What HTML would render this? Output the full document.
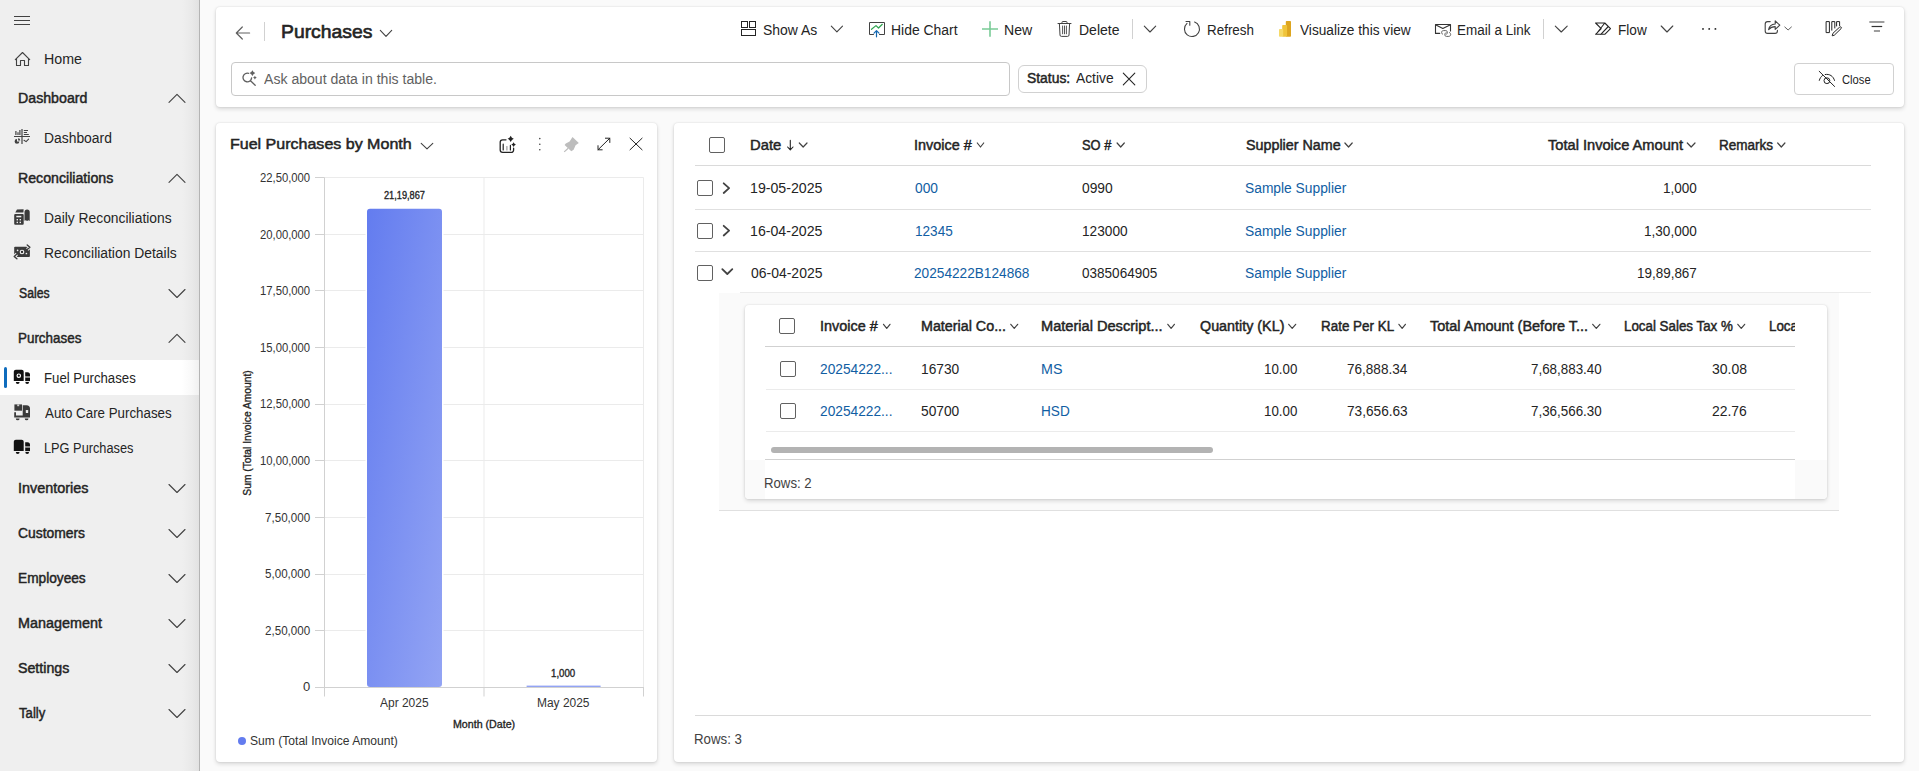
<!DOCTYPE html>
<html lang="en">
<head>
<meta charset="utf-8">
<title>Purchases - Fuel Purchases</title>
<style>
html,body{margin:0;padding:0}
body{width:1919px;height:771px;overflow:hidden;background:#fafafa;font-family:"Liberation Sans",sans-serif;position:relative;color:#242424}
.abs{position:absolute}
.t{position:absolute;white-space:pre;line-height:20px;transform-origin:0 50%}
.card{position:absolute;background:#fff;border-radius:4px;box-shadow:0 0 2px rgba(0,0,0,.12),0 2px 4px rgba(0,0,0,.14)}
.ln{position:absolute;height:1px;background:#e0e0e0}
.vl{position:absolute;width:1px;background:#d1d1d1}
.cb{position:absolute;width:14px;height:14px;border:1px solid #616161;border-radius:2px;background:#fff}
svg{position:absolute;overflow:visible}
.ic{fill:none;stroke:#242424;stroke-width:1;stroke-linecap:round;stroke-linejoin:round}
</style>
</head>
<body>
<!-- ============ SIDEBAR ============ -->
<div id="sidebar" class="abs" style="left:0;top:0;width:199px;height:771px;background:linear-gradient(to right,#efefef 0,#efefef 182px,#e9e9e9 192px,#e2e2e2 199px);border-right:1px solid #b4b4b4"></div>
<div class="abs" style="left:0;top:360px;width:199px;height:35px;background:linear-gradient(to right,#fff 0,#fff 182px,#f8f8f8 192px,#f0f0f0 199px)"></div>
<div class="abs" style="left:4px;top:367px;width:3px;height:21px;background:#0f6cbd;border-radius:2px"></div>
<svg style="left:0;top:0" width="1919" height="771" viewBox="0 0 1919 771"><line x1="14" x2="30" y1="16.5" y2="16.5" stroke="#424242" stroke-width="1"/><line x1="14" x2="30" y1="20.5" y2="20.5" stroke="#424242" stroke-width="1"/><line x1="14" x2="30" y1="24.5" y2="24.5" stroke="#424242" stroke-width="1"/><path d="M15.3 59.7L22.5 52.5L29.7 59.7M16.5 58.6V65.5H20.5V60.5H24.5V65.5H28.5V58.6" fill="none" stroke="#424242" stroke-width="1.1" stroke-linecap="round" stroke-linejoin="round" /><line x1="14" x2="30" y1="136.5" y2="136.5" stroke="#424242" stroke-width="1"/><line x1="22" x2="22" y1="129" y2="144" stroke="#424242" stroke-width="1.2"/><line x1="15.9" x2="15.9" y1="131" y2="135" stroke="#424242" stroke-width="1.2"/><line x1="18" x2="18" y1="132.3" y2="135" stroke="#424242" stroke-width="1.2"/><line x1="19.9" x2="19.9" y1="130" y2="135" stroke="#424242" stroke-width="1.2"/><line x1="23.8" x2="28" y1="130.5" y2="130.5" stroke="#424242" stroke-width="1"/><line x1="23.8" x2="27" y1="132.5" y2="132.5" stroke="#424242" stroke-width="1"/><line x1="23.8" x2="28.8" y1="134.5" y2="134.5" stroke="#424242" stroke-width="1"/><path d="M17 139v2.4h2.4a2.4 2.4 0 1 1-2.4-2.4Z" fill="#424242" /><path d="M18.1 138.2a2.3 2.3 0 0 1 2.2 2.2h-2.2Z" fill="#424242" /><path d="M24 140.3L26.1 141.6L28.6 139.2" fill="none" stroke="#424242" stroke-width="1.1" stroke-linecap="round" stroke-linejoin="round" /><path d="M15.2 214h7.5a1 1 0 0 1 1 1v8.8a1 1 0 0 1-1 1h-7.5a1 1 0 0 1-1-1V215a1 1 0 0 1 1-1Z" fill="#3b3b3b" /><path d="M15.3 212.6L17 209.6L23.6 209.2L23.4 212.6Z" fill="#3b3b3b" /><path d="M24.5 220.8V212a2.6 2.6 0 0 1 5.2 0V220.9L28.4 220.2L27.1 220.9L25.8 220.2Z" fill="#3b3b3b" /><rect x="16.3" y="215.8" width="5" height="1.5" fill="#efefef"/><rect x="16.6" y="219.0" width="1.4" height="1.4" fill="#efefef"/><rect x="16.6" y="221.70000000000002" width="1.4" height="1.4" fill="#efefef"/><rect x="19.6" y="219.0" width="1.4" height="1.4" fill="#efefef"/><rect x="19.6" y="221.70000000000002" width="1.4" height="1.4" fill="#efefef"/><rect x="14.2" y="246.7" width="15.7" height="10.3" rx="0.9" fill="#3b3b3b"/><polyline points="27.2,244.9 29.9,247.2 27.2,249.5" fill="none" stroke="#efefef" stroke-width="3.3" stroke-linejoin="miter"/><polyline points="27.2,244.9 29.9,247.2 27.2,249.5" fill="none" stroke="#3b3b3b" stroke-width="1.35" stroke-linecap="round" stroke-linejoin="round"/><polyline points="16.9,254 14.2,256.4 16.9,258.8" fill="none" stroke="#efefef" stroke-width="3.3" stroke-linejoin="miter"/><polyline points="16.9,254 14.2,256.4 16.9,258.8" fill="none" stroke="#3b3b3b" stroke-width="1.35" stroke-linecap="round" stroke-linejoin="round"/><circle cx="22" cy="252" r="1.75" fill="#2a2a2a" stroke="#efefef" stroke-width="1.2"/><circle cx="17.6" cy="250.3" r="0.85" fill="#efefef"/><circle cx="26.4" cy="253.5" r="0.85" fill="#efefef"/><path d="M13.8 381.09999999999997V371.7a2 2 0 0 1 2-2h5.9a2 2 0 0 1 2 2V381.09999999999997Z" fill="#111" /><path d="M25.2 372.2h2.3a2.5 2.5 0 0 1 2.5 2.5V376.0H25.2Z" fill="#111" /><path d="M25.2 377.5H30V381.09999999999997H25.2Z" fill="#111" /><path d="M25.2 376.0H30V377.5H25.2Z" fill="#8a8a8a" /><path d="M15.799999999999999 382.0h3.8a1.9 1.9 0 0 1-3.8 0Z" fill="#111" /><path d="M25.3 382.0h3.8a1.9 1.9 0 0 1-3.8 0Z" fill="#111" /><circle cx="18.8" cy="375.7" r="1.7" fill="#111" stroke="#fff" stroke-width="1.2"/><path d="M14.4 404.4H22V410.7H14.4Z" fill="#3b3b3b" /><rect x="17.2" y="404.4" width="2" height="1.8" fill="#cfcfcf"/><path d="M14.2 412.2H16V415.5H22.7V405.2H26.5a3.5 3.5 0 0 1 3.5 3.5V417.6H14.2Z" fill="#3b3b3b" /><rect x="25.8" y="410" width="2.4" height="3" rx="0.6" fill="#efefef"/><path d="M15.799999999999999 418.4h3.8a1.9 1.9 0 0 1-3.8 0Z" fill="#3b3b3b" /><path d="M24.700000000000003 418.4h3.8a1.9 1.9 0 0 1-3.8 0Z" fill="#3b3b3b" /><path d="M13.8 451.09999999999997V441.7a2 2 0 0 1 2-2h5.9a2 2 0 0 1 2 2V451.09999999999997Z" fill="#111" /><path d="M25.2 442.2h2.3a2.5 2.5 0 0 1 2.5 2.5V446.0H25.2Z" fill="#111" /><path d="M25.2 447.5H30V451.09999999999997H25.2Z" fill="#111" /><path d="M25.2 446.0H30V447.5H25.2Z" fill="#8a8a8a" /><path d="M15.799999999999999 452.0h3.8a1.9 1.9 0 0 1-3.8 0Z" fill="#111" /><path d="M25.3 452.0h3.8a1.9 1.9 0 0 1-3.8 0Z" fill="#111" /><polyline points="169,102.3 177.0,94.3 185,102.3" fill="none" stroke="#424242" stroke-width="1.1" stroke-linecap="round" stroke-linejoin="round"/><polyline points="169,182.3 177.0,174.3 185,182.3" fill="none" stroke="#424242" stroke-width="1.1" stroke-linecap="round" stroke-linejoin="round"/><polyline points="169,342.3 177.0,334.3 185,342.3" fill="none" stroke="#424242" stroke-width="1.1" stroke-linecap="round" stroke-linejoin="round"/><polyline points="169,289.5 177.0,297.5 185,289.5" fill="none" stroke="#424242" stroke-width="1.1" stroke-linecap="round" stroke-linejoin="round"/><polyline points="169,484.5 177.0,492.5 185,484.5" fill="none" stroke="#424242" stroke-width="1.1" stroke-linecap="round" stroke-linejoin="round"/><polyline points="169,529.5 177.0,537.5 185,529.5" fill="none" stroke="#424242" stroke-width="1.1" stroke-linecap="round" stroke-linejoin="round"/><polyline points="169,574.5 177.0,582.5 185,574.5" fill="none" stroke="#424242" stroke-width="1.1" stroke-linecap="round" stroke-linejoin="round"/><polyline points="169,619.5 177.0,627.5 185,619.5" fill="none" stroke="#424242" stroke-width="1.1" stroke-linecap="round" stroke-linejoin="round"/><polyline points="169,664.5 177.0,672.5 185,664.5" fill="none" stroke="#424242" stroke-width="1.1" stroke-linecap="round" stroke-linejoin="round"/><polyline points="169,709.5 177.0,717.5 185,709.5" fill="none" stroke="#424242" stroke-width="1.1" stroke-linecap="round" stroke-linejoin="round"/></svg>

<!-- ============ HEADER CARD ============ -->
<div class="card" style="left:216px;top:7px;width:1688px;height:100px"></div>
<div class="vl" style="left:264px;top:22px;height:19px"></div>
<div class="abs" style="left:231px;top:62px;width:777px;height:32px;border:1px solid #c8c8c8;border-radius:4px;background:#fff"></div>
<div class="abs" style="left:1018px;top:65px;width:127px;height:26px;border:1px solid #d1d1d1;border-radius:6px;background:#fff"></div>
<div class="abs" style="left:1794px;top:63px;width:98px;height:30px;border:1px solid #d1d1d1;border-radius:4px;background:#fff"></div>
<div class="vl" style="left:1132px;top:19px;height:20px"></div>
<div class="vl" style="left:1543px;top:19px;height:20px"></div>

<!-- ============ CHART CARD ============ -->
<div class="card" style="left:216px;top:123px;width:441px;height:639px"></div>
<svg style="left:0;top:0" width="1919" height="771" viewBox="0 0 1919 771"><defs><linearGradient id="bg1" x1="0" y1="0" x2="1" y2="1"><stop offset="0" stop-color="#637cef"/><stop offset="1" stop-color="#93a4f4"/></linearGradient></defs><line x1="324.5" x2="643.5" y1="177.5" y2="177.5" stroke="#ebebeb" stroke-width="1"/><line x1="324.5" x2="643.5" y1="234.5" y2="234.5" stroke="#ebebeb" stroke-width="1"/><line x1="324.5" x2="643.5" y1="290.5" y2="290.5" stroke="#ebebeb" stroke-width="1"/><line x1="324.5" x2="643.5" y1="347.5" y2="347.5" stroke="#ebebeb" stroke-width="1"/><line x1="324.5" x2="643.5" y1="404.5" y2="404.5" stroke="#ebebeb" stroke-width="1"/><line x1="324.5" x2="643.5" y1="460.5" y2="460.5" stroke="#ebebeb" stroke-width="1"/><line x1="324.5" x2="643.5" y1="517.5" y2="517.5" stroke="#ebebeb" stroke-width="1"/><line x1="324.5" x2="643.5" y1="574.5" y2="574.5" stroke="#ebebeb" stroke-width="1"/><line x1="324.5" x2="643.5" y1="630.5" y2="630.5" stroke="#ebebeb" stroke-width="1"/><line x1="484" x2="484" y1="177.5" y2="687.5" stroke="#ebebeb" stroke-width="1"/><line x1="643.5" x2="643.5" y1="177.5" y2="687.5" stroke="#ebebeb" stroke-width="1"/><path d="M367 687V211.7a3 3 0 0 1 3-3h69a3 3 0 0 1 3 3V684a3 3 0 0 1-3 3h-69a3 3 0 0 1-3-3z" fill="url(#bg1)" stroke="#fff" stroke-width="3" paint-order="stroke"/><rect x="526.6" y="685.6" width="74" height="1.4" fill="#93a4f4"/><line x1="324.5" x2="324.5" y1="177.5" y2="696.5" stroke="#d1d1d1" stroke-width="1"/><line x1="324.5" x2="643.5" y1="687.5" y2="687.5" stroke="#d1d1d1" stroke-width="1"/><line x1="315" x2="324.5" y1="177.5" y2="177.5" stroke="#d1d1d1" stroke-width="1"/><line x1="315" x2="324.5" y1="234.5" y2="234.5" stroke="#d1d1d1" stroke-width="1"/><line x1="315" x2="324.5" y1="290.5" y2="290.5" stroke="#d1d1d1" stroke-width="1"/><line x1="315" x2="324.5" y1="347.5" y2="347.5" stroke="#d1d1d1" stroke-width="1"/><line x1="315" x2="324.5" y1="404.5" y2="404.5" stroke="#d1d1d1" stroke-width="1"/><line x1="315" x2="324.5" y1="460.5" y2="460.5" stroke="#d1d1d1" stroke-width="1"/><line x1="315" x2="324.5" y1="517.5" y2="517.5" stroke="#d1d1d1" stroke-width="1"/><line x1="315" x2="324.5" y1="574.5" y2="574.5" stroke="#d1d1d1" stroke-width="1"/><line x1="315" x2="324.5" y1="630.5" y2="630.5" stroke="#d1d1d1" stroke-width="1"/><line x1="315" x2="324.5" y1="687.5" y2="687.5" stroke="#d1d1d1" stroke-width="1"/><line x1="484" x2="484" y1="687" y2="696.5" stroke="#d1d1d1" stroke-width="1"/><line x1="643.5" x2="643.5" y1="687" y2="696.5" stroke="#d1d1d1" stroke-width="1"/><circle cx="242" cy="741" r="4" fill="#637cef"/></svg>

<!-- ============ GRID CARD ============ -->
<div class="card" style="left:674px;top:123px;width:1230px;height:639px"></div>
<div class="ln" style="left:695px;top:165px;width:1176px;background:#dadada"></div>
<div class="ln" style="left:695px;top:209px;width:1176px;background:#e0e0e0"></div>
<div class="ln" style="left:695px;top:251px;width:1176px;background:#e0e0e0"></div>
<div class="ln" style="left:740px;top:292px;width:1131px;background:#ebebeb"></div>
<div class="abs" style="left:719px;top:293px;width:1120px;height:217px;background:#fafafa"></div>
<div class="ln" style="left:719px;top:510px;width:1120px;background:#e0e0e0"></div>
<div class="card" style="left:745px;top:305px;width:1082px;height:194px"></div>
<div class="abs" style="left:745px;top:460px;width:20px;height:39px;background:#fafafa;border-radius:0 0 0 4px"></div>
<div class="abs" style="left:1795px;top:460px;width:32px;height:39px;background:#fafafa;border-radius:0 0 4px 0"></div>
<div class="ln" style="left:765px;top:346px;width:1030px;background:#d1d1d1"></div>
<div class="ln" style="left:766px;top:389px;width:1029px;background:#ebebeb"></div>
<div class="ln" style="left:766px;top:431px;width:1029px;background:#ebebeb"></div>
<div class="ln" style="left:765px;top:459px;width:1030px;background:#d1d1d1"></div>
<div class="abs" style="left:771px;top:447px;width:442px;height:6px;border-radius:3px;background:#b3b3b3"></div>
<div class="ln" style="left:695px;top:715px;width:1176px;background:#dadada"></div>
<div class="cb" style="left:709px;top:137px"></div>
<div class="cb" style="left:697px;top:180px"></div>
<div class="cb" style="left:697px;top:223px"></div>
<div class="cb" style="left:697px;top:265px"></div>
<div class="cb" style="left:779px;top:318px"></div>
<div class="cb" style="left:780px;top:361px"></div>
<div class="cb" style="left:780px;top:403px"></div>
<svg style="left:0;top:0" width="1919" height="771" viewBox="0 0 1919 771"><polyline points="799.3,143 803.15,147 807.0,143" fill="none" stroke="#424242" stroke-width="1.2" stroke-linecap="round" stroke-linejoin="round"/><polyline points="977.3,143 980.5,147 983.7,143" fill="none" stroke="#424242" stroke-width="1.2" stroke-linecap="round" stroke-linejoin="round"/><polyline points="1117.1,143 1120.6999999999998,147 1124.3,143" fill="none" stroke="#424242" stroke-width="1.2" stroke-linecap="round" stroke-linejoin="round"/><polyline points="1344.8999999999999,143 1348.55,147 1352.2,143" fill="none" stroke="#424242" stroke-width="1.2" stroke-linecap="round" stroke-linejoin="round"/><polyline points="1687.3,143 1691.15,147 1695.0,143" fill="none" stroke="#424242" stroke-width="1.2" stroke-linecap="round" stroke-linejoin="round"/><polyline points="1777.7,143 1781.3000000000002,147 1784.9,143" fill="none" stroke="#424242" stroke-width="1.2" stroke-linecap="round" stroke-linejoin="round"/><polyline points="883.5,324.3 886.75,328.3 890.0,324.3" fill="none" stroke="#424242" stroke-width="1.2" stroke-linecap="round" stroke-linejoin="round"/><polyline points="1010.8,324.3 1014.25,328.3 1017.7,324.3" fill="none" stroke="#424242" stroke-width="1.2" stroke-linecap="round" stroke-linejoin="round"/><polyline points="1167.8,324.3 1171.1,328.3 1174.4,324.3" fill="none" stroke="#424242" stroke-width="1.2" stroke-linecap="round" stroke-linejoin="round"/><polyline points="1288.7,324.3 1292.2,328.3 1295.7,324.3" fill="none" stroke="#424242" stroke-width="1.2" stroke-linecap="round" stroke-linejoin="round"/><polyline points="1398.8999999999999,324.3 1402.15,328.3 1405.4,324.3" fill="none" stroke="#424242" stroke-width="1.2" stroke-linecap="round" stroke-linejoin="round"/><polyline points="1592.7,324.3 1596.3000000000002,328.3 1599.9,324.3" fill="none" stroke="#424242" stroke-width="1.2" stroke-linecap="round" stroke-linejoin="round"/><polyline points="1737.8,324.3 1741.25,328.3 1744.7,324.3" fill="none" stroke="#424242" stroke-width="1.2" stroke-linecap="round" stroke-linejoin="round"/><path d="M790.3 140.4V149.8M787.6 147L790.3 149.9L793 147" fill="none" stroke="#242424" stroke-width="1.1" stroke-linecap="round" stroke-linejoin="round"/><polyline points="723.7,183.3 729.1,188.15 723.7,193" fill="none" stroke="#424242" stroke-width="1.8" stroke-linecap="round" stroke-linejoin="round"/><polyline points="723.7,225.8 729.1,230.65 723.7,235.5" fill="none" stroke="#424242" stroke-width="1.8" stroke-linecap="round" stroke-linejoin="round"/><polyline points="722.3,269.2 727.3,274 732.3,269.2" fill="none" stroke="#424242" stroke-width="1.8" stroke-linecap="round" stroke-linejoin="round"/></svg>
<svg style="left:0;top:0" width="1919" height="771" viewBox="0 0 1919 771"><path d="M249.6 33H236.4M242.3 27L236.3 33L242.3 39" fill="none" stroke="#616161" stroke-width="1.2" stroke-linecap="round" stroke-linejoin="round" /><polyline points="380.3,30.4 386.0,36.3 391.7,30.4" fill="none" stroke="#424242" stroke-width="1.1" stroke-linecap="round" stroke-linejoin="round"/><path d="M248.6 73.4A4.3 4.3 0 1 0 251.6 77.9M250.5 80.7L255.2 85.2" fill="none" stroke="#616161" stroke-width="1.3" stroke-linecap="round" stroke-linejoin="round" /><path d="M252.4 70.19999999999999Q253.21200000000002 72.288 255.3 73.1Q253.21200000000002 73.91199999999999 252.4 76.0Q251.588 73.91199999999999 249.5 73.1Q251.588 72.288 252.4 70.19999999999999Z" fill="#616161" /><path d="M254.9 75.69999999999999Q255.43200000000002 77.068 256.8 77.6Q255.43200000000002 78.13199999999999 254.9 79.5Q254.368 78.13199999999999 253.0 77.6Q254.368 77.068 254.9 75.69999999999999Z" fill="#616161" /><rect x="741.5" y="21.5" width="6" height="6" fill="none" stroke="#242424" stroke-width="1"/><rect x="749.5" y="21.5" width="6" height="6" fill="none" stroke="#242424" stroke-width="1"/><rect x="741.5" y="29.5" width="14" height="6" fill="none" stroke="#242424" stroke-width="1"/><polyline points="831.3,26.2 836.9,31.8 842.5,26.2" fill="none" stroke="#424242" stroke-width="1.1" stroke-linecap="round" stroke-linejoin="round"/><path d="M873.5 34.5H869.5V22.5H884.5V34.5H879.5" fill="none" stroke="#424242" stroke-width="1" stroke-linecap="round" stroke-linejoin="round" /><path d="M871.5 29.3L876 25.6L878.5 28L882.3 24.3" fill="none" stroke="#2ea44f" stroke-width="1.2" stroke-linecap="round" stroke-linejoin="round" /><path d="M876.5 36.8V30.8M874 33.2L876.5 30.7L879 33.2" fill="none" stroke="#1266b0" stroke-width="1.2" stroke-linecap="round" stroke-linejoin="round" /><path d="M982 29H998M990 21.2V36.8" fill="none" stroke="#79cb97" stroke-width="1.6"/><path d="M1058 23.5H1071M1062 23.3V22.3a0.8 0.8 0 0 1 0.8-0.8h3.4a0.8 0.8 0 0 1 0.8 0.8V23.3M1059.4 23.7L1060 35a1.4 1.4 0 0 0 1.4 1.4h6.2a1.4 1.4 0 0 0 1.4-1.4L1069.6 23.7" fill="none" stroke="#424242" stroke-width="1" stroke-linecap="round" stroke-linejoin="round" /><path d="M1062.6 26V33.8M1064.5 26V33.8M1066.4 26V33.8" fill="none" stroke="#424242" stroke-width="0.9" stroke-linecap="round" stroke-linejoin="round" /><polyline points="1144.3,26.2 1150.0,32 1155.7,26.2" fill="none" stroke="#424242" stroke-width="1.1" stroke-linecap="round" stroke-linejoin="round"/><path d="M1194.6 22A7.5 7.5 0 1 1 1187 23.4M1186 21.5H1189.8V25.2" fill="none" stroke="#424242" stroke-width="1.1" stroke-linecap="round" stroke-linejoin="round" /><rect x="1285.8" y="21" width="5.2" height="15.8" rx="0.8" fill="#dda51f"/><rect x="1282.2" y="25" width="4.9" height="11.8" rx="0.8" fill="#f0c43a"/><rect x="1279" y="29" width="4.2" height="7.8" rx="0.8" fill="#f6da68"/><path d="M1439.7 33.4H1435.5V24.5H1450.5V31M1436 25L1442.8 28.5L1450 25" fill="none" stroke="#333" stroke-width="1.1" stroke-linecap="round" stroke-linejoin="round" /><path d="M1442.7 34.4C1441 33 1441.2 30.8 1443.4 30.6H1445.8C1448 30.8 1448 33.6 1446 34.6M1449.5 32.4C1451.4 33.8 1451 36.2 1448.8 36.4H1446.4C1444.2 36.2 1444.2 33.4 1446.2 32.4" fill="none" stroke="#616161" stroke-width="1" stroke-linecap="round" stroke-linejoin="round" /><polyline points="1555.3,26.2 1561.25,32 1567.2,26.2" fill="none" stroke="#424242" stroke-width="1.1" stroke-linecap="round" stroke-linejoin="round"/><path d="M1595.6 23H1604.8L1610.5 28.6L1604.8 34.3H1595.6L1601.2 28.6ZM1604.8 23L1596.2 34M1608.3 26.5L1600.8 34.3" fill="none" stroke="#242424" stroke-width="1.1" stroke-linecap="round" stroke-linejoin="round" /><polyline points="1661.2,26 1667.0,32 1672.8,26" fill="none" stroke="#424242" stroke-width="1.1" stroke-linecap="round" stroke-linejoin="round"/><circle cx="1703" cy="28.9" r="0.95" fill="#242424"/><circle cx="1709.2" cy="28.9" r="0.95" fill="#242424"/><circle cx="1715.4" cy="28.9" r="0.95" fill="#242424"/><path d="M1770.2 21.6H1767.6a2.4 2.4 0 0 0-2.4 2.4V31a2.4 2.4 0 0 0 2.4 2.4H1775a2.4 2.4 0 0 0 2.4-2.4V30.4" fill="none" stroke="#424242" stroke-width="1.1" stroke-linecap="round" stroke-linejoin="round" /><path d="M1768.6 29.6C1769.2 26 1771.6 24.2 1775.2 24V20.9L1779.8 25.2L1775.2 29.4V26.6C1772.4 26.6 1770.4 27.4 1768.6 29.6Z" fill="none" stroke="#424242" stroke-width="1.1" stroke-linecap="round" stroke-linejoin="round" /><polyline points="1784.8,27 1788.1,30 1791.4,27" fill="none" stroke="#616161" stroke-width="1" stroke-linecap="round" stroke-linejoin="round"/><path d="M1826.5 21.6H1829.4V32.6H1826.5ZM1831.8 30.2V21.6H1834.8V28M1836.6 26V21.6H1839.6V25.6" fill="none" stroke="#242424" stroke-width="1" stroke-linecap="round" stroke-linejoin="round" /><path d="M1839.6 27.1a1 1 0 0 1 1.5 1.5L1834.3 35.2L1832.2 35.8L1832.8 33.7Z" fill="none" stroke="#242424" stroke-width="1" stroke-linecap="round" stroke-linejoin="round" /><line x1="1869.3" x2="1884.4" y1="22" y2="22" stroke="#757575" stroke-width="1.4"/><line x1="1871.6" x2="1882.2" y1="26.5" y2="26.5" stroke="#333" stroke-width="1.2"/><line x1="1873.9" x2="1880" y1="31" y2="31" stroke="#757575" stroke-width="1.4"/><path d="M1123.3 73.2L1134.8 84.8M1134.8 73.2L1123.3 84.8" fill="none" stroke="#242424" stroke-width="1.1" stroke-linecap="round" stroke-linejoin="round" /><path d="M1819.2 71.3L1834.6 86.5" fill="none" stroke="#242424" stroke-width="1" stroke-linecap="round" stroke-linejoin="round" /><path d="M1819.3 80.4C1819.9 78.2 1821 76.6 1822.5 75.5M1825.2 74.5C1829.6 73.6 1833.4 76.2 1834.5 80.4" fill="none" stroke="#242424" stroke-width="1" stroke-linecap="round" stroke-linejoin="round" /><circle cx="1826.9" cy="80.7" r="2.9" fill="none" stroke="#242424" stroke-width="1"/><polyline points="421.2,143.4 427.0,148.8 432.8,143.4" fill="none" stroke="#424242" stroke-width="1.1" stroke-linecap="round" stroke-linejoin="round"/><path d="M506 139.8H502.6a2.4 2.4 0 0 0-2.4 2.4V150a2.4 2.4 0 0 0 2.4 2.4H511.2a2.4 2.4 0 0 0 2.4-2.4V148.2" fill="none" stroke="#242424" stroke-width="1.3" stroke-linecap="round" stroke-linejoin="round" /><path d="M503.2 144.2V150M510.4 145.4V150" fill="none" stroke="#242424" stroke-width="1.2" stroke-linecap="round" stroke-linejoin="round" /><path d="M506.9 146.6V150" fill="none" stroke="#9a9a9a" stroke-width="1.2" stroke-linecap="round" stroke-linejoin="round" /><path d="M510.7 135.70000000000002Q511.568 137.93200000000002 513.8 138.8Q511.568 139.668 510.7 141.9Q509.832 139.668 507.59999999999997 138.8Q509.832 137.93200000000002 510.7 135.70000000000002Z" fill="#242424" /><path d="M513.6 142.29999999999998Q514.244 143.956 515.9 144.6Q514.244 145.244 513.6 146.9Q512.956 145.244 511.3 144.6Q512.956 143.956 513.6 142.29999999999998Z" fill="#242424" /><circle cx="539.8" cy="138.6" r="0.8" fill="#424242"/><circle cx="539.8" cy="144.2" r="0.8" fill="#424242"/><circle cx="539.8" cy="149.7" r="0.8" fill="#424242"/><path d="M572.5 137.1L578.8 142.9L575.6 145.3L573.6 149.8L571.3 151.3L564.6 145L565.8 143.6L569.6 141.6Z" fill="#bdbdbd" /><path d="M568.2 148.2L564.2 151.9" stroke="#bdbdbd" stroke-width="1.2" fill="none"/><path d="M598 149.8L609.8 138.2M605.4 138.2H609.8V142.5M598 145.7V149.8H602.2" fill="none" stroke="#242424" stroke-width="1" stroke-linecap="round" stroke-linejoin="round" /><path d="M630 138.2L642.1 149.8M642.1 138.2L630 149.8" fill="none" stroke="#242424" stroke-width="1" stroke-linecap="round" stroke-linejoin="round" /></svg>

<!-- ============ TEXT ============ -->
<nav aria-label="Site map">
<span class="t" style="left:44.00px;top:49px;font-size:14px;font-weight:400;color:#242424;transform:scaleX(1.0152)">Home</span>
<span class="t" style="left:18.00px;top:88px;font-size:14px;font-weight:400;-webkit-text-stroke:0.46px currentColor;color:#242424;transform:scaleX(1.0130)">Dashboard</span>
<span class="t" style="left:44.00px;top:128px;font-size:14px;font-weight:400;color:#242424;transform:scaleX(0.9909)">Dashboard</span>
<span class="t" style="left:18.00px;top:168px;font-size:14px;font-weight:400;-webkit-text-stroke:0.46px currentColor;color:#242424;transform:scaleX(1.0120)">Reconciliations</span>
<span class="t" style="left:44.00px;top:208px;font-size:14px;font-weight:400;color:#242424;transform:scaleX(0.9878)">Daily Reconciliations</span>
<span class="t" style="left:44.00px;top:243px;font-size:14px;font-weight:400;color:#242424;transform:scaleX(0.9911)">Reconciliation Details</span>
<span class="t" style="left:19.00px;top:283px;font-size:14px;font-weight:400;-webkit-text-stroke:0.46px currentColor;color:#242424;transform:scaleX(0.8721)">Sales</span>
<span class="t" style="left:18.00px;top:328px;font-size:14px;font-weight:400;-webkit-text-stroke:0.46px currentColor;color:#242424;transform:scaleX(0.9581)">Purchases</span>
<span class="t" style="left:44.00px;top:368px;font-size:14px;font-weight:400;color:#242424;transform:scaleX(0.9433)">Fuel Purchases</span>
<span class="t" style="left:45.00px;top:403px;font-size:14px;font-weight:400;color:#242424;transform:scaleX(0.9517)">Auto Care Purchases</span>
<span class="t" style="left:44.00px;top:438px;font-size:14px;font-weight:400;color:#242424;transform:scaleX(0.9124)">LPG Purchases</span>
<span class="t" style="left:18.00px;top:478px;font-size:14px;font-weight:400;-webkit-text-stroke:0.46px currentColor;color:#242424;transform:scaleX(1.0271)">Inventories</span>
<span class="t" style="left:18.00px;top:523px;font-size:14px;font-weight:400;-webkit-text-stroke:0.46px currentColor;color:#242424;transform:scaleX(0.9897)">Customers</span>
<span class="t" style="left:18.00px;top:568px;font-size:14px;font-weight:400;-webkit-text-stroke:0.46px currentColor;color:#242424;transform:scaleX(0.9775)">Employees</span>
<span class="t" style="left:18.00px;top:613px;font-size:14px;font-weight:400;-webkit-text-stroke:0.46px currentColor;color:#242424;transform:scaleX(1.0264)">Management</span>
<span class="t" style="left:18.00px;top:658px;font-size:14px;font-weight:400;-webkit-text-stroke:0.46px currentColor;color:#242424;transform:scaleX(1.0146)">Settings</span>
<span class="t" style="left:19.00px;top:703px;font-size:14px;font-weight:400;-webkit-text-stroke:0.46px currentColor;color:#242424;transform:scaleX(0.9391)">Tally</span>
</nav>
<header aria-label="Commands">
<span class="t" style="left:281.00px;top:22px;font-size:19px;font-weight:400;-webkit-text-stroke:0.63px currentColor;color:#242424;transform:scaleX(1.0173)">Purchases</span>
<span class="t" style="left:264.00px;top:69px;font-size:14px;font-weight:400;color:#616161;transform:scaleX(1.0055)">Ask about data in this table.</span>
<span class="t" style="left:763.00px;top:20px;font-size:14px;font-weight:400;color:#242424;transform:scaleX(0.9958)">Show As</span>
<span class="t" style="left:891.00px;top:20px;font-size:14px;font-weight:400;color:#242424;transform:scaleX(0.9946)">Hide Chart</span>
<span class="t" style="left:1004.00px;top:20px;font-size:14px;font-weight:400;color:#242424;transform:scaleX(1.0082)">New</span>
<span class="t" style="left:1079.00px;top:20px;font-size:14px;font-weight:400;color:#242424;transform:scaleX(1.0012)">Delete</span>
<span class="t" style="left:1207.00px;top:20px;font-size:14px;font-weight:400;color:#242424;transform:scaleX(0.9582)">Refresh</span>
<span class="t" style="left:1300.00px;top:20px;font-size:14px;font-weight:400;color:#242424;transform:scaleX(0.9768)">Visualize this view</span>
<span class="t" style="left:1457.00px;top:20px;font-size:14px;font-weight:400;color:#242424;transform:scaleX(0.9624)">Email a Link</span>
<span class="t" style="left:1618.00px;top:20px;font-size:14px;font-weight:400;color:#242424;transform:scaleX(0.9712)">Flow</span>
<span class="t" style="left:1027.00px;top:68px;font-size:14px;font-weight:400;-webkit-text-stroke:0.46px currentColor;color:#242424;transform:scaleX(0.9908)">Status:</span>
<span class="t" style="left:1076.00px;top:68px;font-size:14px;font-weight:400;color:#242424;transform:scaleX(0.9867)">Active</span>
<span class="t" style="left:1842.00px;top:70px;font-size:12px;font-weight:400;color:#242424;transform:scaleX(0.9324)">Close</span>
</header>
<section aria-label="Fuel Purchases by Month chart">
<span class="t" style="left:230.00px;top:134px;font-size:15px;font-weight:400;-webkit-text-stroke:0.49px currentColor;color:#242424;transform:scaleX(1.0680)">Fuel Purchases by Month</span>
<span class="t" style="left:260.00px;top:168px;font-size:12px;font-weight:400;color:#333;transform:scaleX(0.9390)">22,50,000</span>
<span class="t" style="left:260.00px;top:225px;font-size:12px;font-weight:400;color:#333;transform:scaleX(0.9390)">20,00,000</span>
<span class="t" style="left:260.00px;top:281px;font-size:12px;font-weight:400;color:#333;transform:scaleX(0.9390)">17,50,000</span>
<span class="t" style="left:260.00px;top:338px;font-size:12px;font-weight:400;color:#333;transform:scaleX(0.9390)">15,00,000</span>
<span class="t" style="left:260.00px;top:394px;font-size:12px;font-weight:400;color:#333;transform:scaleX(0.9390)">12,50,000</span>
<span class="t" style="left:260.00px;top:451px;font-size:12px;font-weight:400;color:#333;transform:scaleX(0.9390)">10,00,000</span>
<span class="t" style="left:265.00px;top:508px;font-size:12px;font-weight:400;color:#333;transform:scaleX(0.9668)">7,50,000</span>
<span class="t" style="left:265.00px;top:564px;font-size:12px;font-weight:400;color:#333;transform:scaleX(0.9668)">5,00,000</span>
<span class="t" style="left:265.00px;top:621px;font-size:12px;font-weight:400;color:#333;transform:scaleX(0.9668)">2,50,000</span>
<span class="t" style="left:303.00px;top:677px;font-size:12px;font-weight:400;color:#333;transform:scaleX(1.0816)">0</span>
<span class="t" style="left:384.00px;top:186px;font-size:10px;font-weight:400;-webkit-text-stroke:0.33px currentColor;color:#242424;transform:scaleX(0.9214)">21,19,867</span>
<span class="t" style="left:551.00px;top:664px;font-size:10px;font-weight:400;-webkit-text-stroke:0.33px currentColor;color:#242424;transform:scaleX(0.9665)">1,000</span>
<span class="t" style="left:380.00px;top:693px;font-size:12px;font-weight:400;color:#333;transform:scaleX(0.9979)">Apr 2025</span>
<span class="t" style="left:537.00px;top:693px;font-size:12px;font-weight:400;color:#333;transform:scaleX(0.9957)">May 2025</span>
<span class="t" style="left:453.00px;top:715px;font-size:10px;font-weight:400;-webkit-text-stroke:0.33px currentColor;color:#242424;transform:scaleX(1.0647)">Month (Date)</span>
<span class="t" style="left:250.00px;top:731px;font-size:12px;font-weight:400;color:#333;transform:scaleX(1.0076)">Sum (Total Invoice Amount)</span>
<span class="t" style="left:247.60px;top:432.50px;font-size:10px;font-weight:400;-webkit-text-stroke:0.33px currentColor;color:#242424;transform:translate(-50%,-50%) rotate(-90deg) scaleX(1.0246);transform-origin:center">Sum (Total Invoice Amount)</span>
</section>
<main aria-label="Fuel Purchases grid">
<span class="t" style="left:750.00px;top:135px;font-size:14px;font-weight:400;-webkit-text-stroke:0.46px currentColor;color:#242424;transform:scaleX(1.0554)">Date</span>
<span class="t" style="left:914.00px;top:135px;font-size:14px;font-weight:400;-webkit-text-stroke:0.46px currentColor;color:#242424;transform:scaleX(1.0296)">Invoice #</span>
<span class="t" style="left:1082.00px;top:135px;font-size:14px;font-weight:400;-webkit-text-stroke:0.46px currentColor;color:#242424;transform:scaleX(0.9188)">SO #</span>
<span class="t" style="left:1246.00px;top:135px;font-size:14px;font-weight:400;-webkit-text-stroke:0.46px currentColor;color:#242424;transform:scaleX(1.0224)">Supplier Name</span>
<span class="t" style="left:1548.00px;top:135px;font-size:14px;font-weight:400;-webkit-text-stroke:0.46px currentColor;color:#242424;transform:scaleX(1.0450)">Total Invoice Amount</span>
<span class="t" style="left:1719.00px;top:135px;font-size:14px;font-weight:400;-webkit-text-stroke:0.46px currentColor;color:#242424;transform:scaleX(0.9661)">Remarks</span>
<span class="t" style="left:750.00px;top:178px;font-size:14px;font-weight:400;color:#242424;transform:scaleX(1.0120)">19-05-2025</span>
<span class="t" style="left:915.00px;top:178px;font-size:14px;font-weight:400;color:#115ea3;transform:scaleX(0.9833)">000</span>
<span class="t" style="left:1082.00px;top:178px;font-size:14px;font-weight:400;color:#242424;transform:scaleX(0.9861)">0990</span>
<span class="t" style="left:1245.00px;top:178px;font-size:14px;font-weight:400;color:#115ea3;transform:scaleX(0.9857)">Sample Supplier</span>
<span class="t" style="left:1663.00px;top:178px;font-size:14px;font-weight:400;color:#242424;transform:scaleX(0.9670)">1,000</span>
<span class="t" style="left:750.00px;top:221px;font-size:14px;font-weight:400;color:#242424;transform:scaleX(1.0120)">16-04-2025</span>
<span class="t" style="left:915.00px;top:221px;font-size:14px;font-weight:400;color:#115ea3;transform:scaleX(0.9699)">12345</span>
<span class="t" style="left:1082.00px;top:221px;font-size:14px;font-weight:400;color:#242424;transform:scaleX(0.9758)">123000</span>
<span class="t" style="left:1245.00px;top:221px;font-size:14px;font-weight:400;color:#115ea3;transform:scaleX(0.9857)">Sample Supplier</span>
<span class="t" style="left:1644.00px;top:221px;font-size:14px;font-weight:400;color:#242424;transform:scaleX(0.9692)">1,30,000</span>
<span class="t" style="left:751.00px;top:263px;font-size:14px;font-weight:400;color:#242424;transform:scaleX(0.9974)">06-04-2025</span>
<span class="t" style="left:914.00px;top:263px;font-size:14px;font-weight:400;color:#115ea3;transform:scaleX(0.9755)">20254222B124868</span>
<span class="t" style="left:1082.00px;top:263px;font-size:14px;font-weight:400;color:#242424;transform:scaleX(0.9666)">0385064905</span>
<span class="t" style="left:1245.00px;top:263px;font-size:14px;font-weight:400;color:#115ea3;transform:scaleX(0.9857)">Sample Supplier</span>
<span class="t" style="left:1637.00px;top:263px;font-size:14px;font-weight:400;color:#242424;transform:scaleX(0.9605)">19,89,867</span>
<span class="t" style="left:820.00px;top:316px;font-size:14px;font-weight:400;-webkit-text-stroke:0.46px currentColor;color:#242424;transform:scaleX(1.0296)">Invoice #</span>
<span class="t" style="left:921.00px;top:316px;font-size:14px;font-weight:400;-webkit-text-stroke:0.46px currentColor;color:#242424;transform:scaleX(1.0217)">Material Co...</span>
<span class="t" style="left:1041.00px;top:316px;font-size:14px;font-weight:400;-webkit-text-stroke:0.46px currentColor;color:#242424;transform:scaleX(1.0421)">Material Descript...</span>
<span class="t" style="left:1200.00px;top:316px;font-size:14px;font-weight:400;-webkit-text-stroke:0.46px currentColor;color:#242424;transform:scaleX(1.0236)">Quantity (KL)</span>
<span class="t" style="left:1321.00px;top:316px;font-size:14px;font-weight:400;-webkit-text-stroke:0.46px currentColor;color:#242424;transform:scaleX(0.9590)">Rate Per KL</span>
<span class="t" style="left:1430.00px;top:316px;font-size:14px;font-weight:400;-webkit-text-stroke:0.46px currentColor;color:#242424;transform:scaleX(1.0329)">Total Amount (Before T...</span>
<span class="t" style="left:1624.00px;top:316px;font-size:14px;font-weight:400;-webkit-text-stroke:0.46px currentColor;color:#242424;transform:scaleX(0.9533)">Local Sales Tax %</span>
<div style="position:absolute;left:0;top:316px;width:1795px;height:20px;overflow:hidden"><span class="t" style="left:1769.00px;top:0px;font-size:14px;font-weight:400;-webkit-text-stroke:0.46px currentColor;color:#242424;transform:scaleX(0.9530)">Local Sales Tax Amount</span></div>
<span class="t" style="left:820.00px;top:359px;font-size:14px;font-weight:400;color:#115ea3;transform:scaleX(0.9800)">20254222...</span>
<span class="t" style="left:921.00px;top:359px;font-size:14px;font-weight:400;color:#242424;transform:scaleX(0.9832)">16730</span>
<span class="t" style="left:1041.00px;top:359px;font-size:14px;font-weight:400;color:#115ea3;transform:scaleX(1.0191)">MS</span>
<span class="t" style="left:1264.00px;top:359px;font-size:14px;font-weight:400;color:#242424;transform:scaleX(0.9526)">10.00</span>
<span class="t" style="left:1347.00px;top:359px;font-size:14px;font-weight:400;color:#242424;transform:scaleX(0.9671)">76,888.34</span>
<span class="t" style="left:1531.00px;top:359px;font-size:14px;font-weight:400;color:#242424;transform:scaleX(0.9564)">7,68,883.40</span>
<span class="t" style="left:1712.00px;top:359px;font-size:14px;font-weight:400;color:#242424;transform:scaleX(0.9986)">30.08</span>
<span class="t" style="left:820.00px;top:401px;font-size:14px;font-weight:400;color:#115ea3;transform:scaleX(0.9800)">20254222...</span>
<span class="t" style="left:921.00px;top:401px;font-size:14px;font-weight:400;color:#242424;transform:scaleX(0.9832)">50700</span>
<span class="t" style="left:1041.00px;top:401px;font-size:14px;font-weight:400;color:#115ea3;transform:scaleX(0.9709)">HSD</span>
<span class="t" style="left:1264.00px;top:401px;font-size:14px;font-weight:400;color:#242424;transform:scaleX(0.9526)">10.00</span>
<span class="t" style="left:1347.00px;top:401px;font-size:14px;font-weight:400;color:#242424;transform:scaleX(0.9743)">73,656.63</span>
<span class="t" style="left:1531.00px;top:401px;font-size:14px;font-weight:400;color:#242424;transform:scaleX(0.9564)">7,36,566.30</span>
<span class="t" style="left:1712.00px;top:401px;font-size:14px;font-weight:400;color:#242424;transform:scaleX(0.9937)">22.76</span>
<span class="t" style="left:764.00px;top:473px;font-size:14px;font-weight:400;color:#424242;transform:scaleX(0.9424)">Rows: 2</span>
<span class="t" style="left:694.00px;top:729px;font-size:14px;font-weight:400;color:#424242;transform:scaleX(0.9479)">Rows: 3</span>
</main>
</body>
</html>
